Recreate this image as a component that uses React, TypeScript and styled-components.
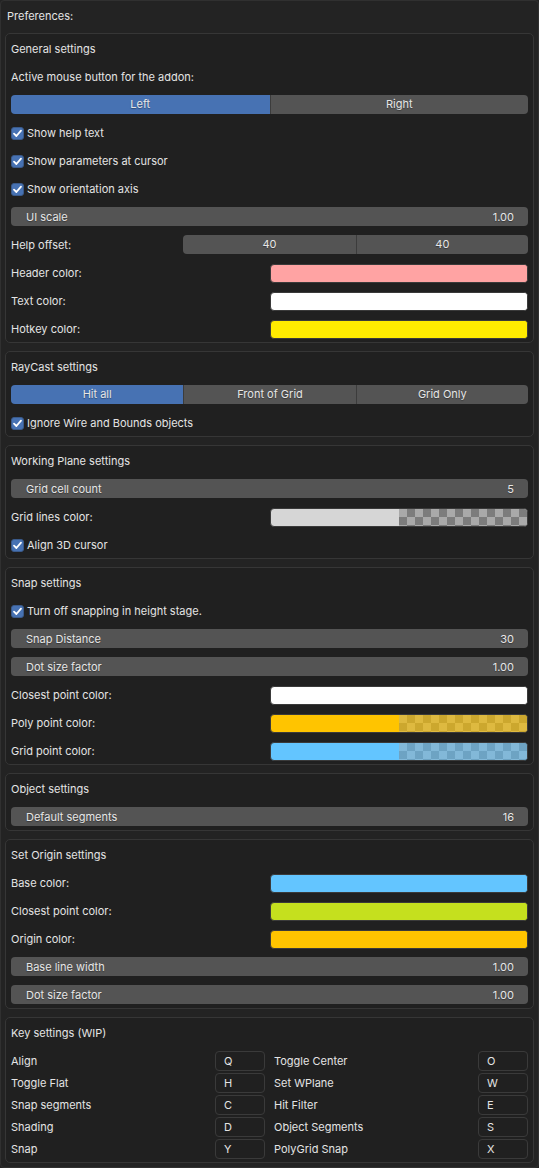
import React from "react";
import styled, { createGlobalStyle } from "styled-components";

const GlobalStyle = createGlobalStyle`
  html, body { margin: 0; padding: 0; background: #232323; }
  * { box-sizing: border-box; }
  body { font-family: Inter, "Noto Sans", "DejaVu Sans", sans-serif; font-size: 11px; color: #e4e4e4; }
`;

const Panel = styled.div`
  width: 539px;
  height: 1168px;
  border: 1px solid #303030;
  border-radius: 4px;
  padding: 5px 4px 5px 4px;
  display: flex;
  flex-direction: column;
  gap: 7px;
  background: #232323;
  & > section + section {
    margin-top: 1px;
  }
`;

const Title = styled.div`
  height: 20px;
  line-height: 20px;
  padding-left: 2px;
`;

const Box = styled.section`
  border: 1px solid #363636;
  border-radius: 5px;
  background: #202020;
  padding: 5px 5px 3px 5px;
  display: flex;
  flex-direction: column;
  gap: 8px;
`;

const Label = styled.div`
  height: 20px;
  line-height: 20px;
  white-space: nowrap;
  overflow: hidden;
`;

const Segmented = styled.div<{ $cols: number }>`
  display: grid;
  grid-template-columns: repeat(${(p) => p.$cols}, 1fr);
  height: 19px;
  border-radius: 4px;
  overflow: hidden;
  margin-bottom: 1px;
`;

const SegButton = styled.div<{ $active?: boolean }>`
  background: ${(p) => (p.$active ? "#4772b3" : "#545454")};
  color: #e6e6e6;
  text-align: center;
  line-height: 19px;
  text-shadow: 0 1px 1px rgba(0, 0, 0, 0.35);
  & + & {
    border-left: 1px solid #3c3c3c;
  }
`;

const CheckRow = styled.label`
  display: flex;
  align-items: center;
  gap: 3px;
  height: 20px;
`;

const CheckBox = styled.span`
  width: 13px;
  height: 13px;
  border-radius: 3px;
  background: #4772b3;
  border: 1px solid #3a5a8a;
  display: flex;
  align-items: center;
  justify-content: center;
`;

const Slider = styled.div`
  height: 19px;
  margin-bottom: 1px;
  border-radius: 4px;
  background: #545454;
  display: flex;
  justify-content: space-between;
  align-items: center;
  padding: 0 14px 0 15px;
  color: #e6e6e6;
  text-shadow: 0 1px 1px rgba(0, 0, 0, 0.35);
`;

const SplitRow = styled.div<{ $tpl: string }>`
  display: grid;
  grid-template-columns: ${(p) => p.$tpl};
  align-items: center;
  height: 20px;
`;

const ColorField = styled.div<{ $color: string; $alpha?: string }>`
  height: 19px;
  border-radius: 4px;
  border: 1px solid #3a3a3a;
  overflow: hidden;
  display: grid;
  grid-template-columns: 1fr 1fr;
  background: ${(p) => p.$color};
  & > span:last-child {
    background: ${(p) =>
      p.$alpha
        ? `linear-gradient(${p.$alpha}, ${p.$alpha}), conic-gradient(#7a7a7a 25%, #a8a8a8 0 50%, #7a7a7a 0 75%, #a8a8a8 0) 0 0 / 16px 16px`
        : p.$color};
  }
`;

const KeyGrid = styled.div`
  display: grid;
  grid-template-columns: 1fr 1fr;
  column-gap: 9px;
  row-gap: 2px;
`;

const KeyRow = styled.div`
  display: flex;
  align-items: center;
  justify-content: space-between;
  height: 20px;
`;

const KeyBox = styled.div`
  width: 50px;
  height: 20px;
  border: 1px solid #3a3a3a;
  border-radius: 4px;
  padding-left: 8px;
  line-height: 18px;
  color: #e4e4e4;
`;

const Check = ({ label }: { label: string }) => (
  <CheckRow>
    <CheckBox>
      <svg width="11" height="11" viewBox="0 0 11 11">
        <path d="M2 5.6 L4.4 8 L9 2.6" fill="none" stroke="#fff" strokeWidth="1.8" strokeLinecap="round" strokeLinejoin="round" />
      </svg>
    </CheckBox>
    <span>{label}</span>
  </CheckRow>
);

const SliderRow = ({ label, value }: { label: string; value: string }) => (
  <Slider>
    <span>{label}</span>
    <span>{value}</span>
  </Slider>
);

const ColorRow = ({ label, color, alpha }: { label: string; color: string; alpha?: string }) => (
  <SplitRow $tpl="1fr 1fr">
    <Label>{label}</Label>
    <ColorField $color={color} $alpha={alpha}>
      <span />
      <span />
    </ColorField>
  </SplitRow>
);

const keys: [string, string][] = [
  ["Align", "Q"],
  ["Toggle Center", "O"],
  ["Toggle Flat", "H"],
  ["Set WPlane", "W"],
  ["Snap segments", "C"],
  ["Hit Filter", "E"],
  ["Shading", "D"],
  ["Object Segments", "S"],
  ["Snap", "Y"],
  ["PolyGrid Snap", "X"],
];

export default function App() {
  return (
    <>
      <GlobalStyle />
      <Panel>
        <Title>Preferences:</Title>

        <Box>
          <Label>General settings</Label>
          <Label>Active mouse button for the addon:</Label>
          <Segmented $cols={2}>
            <SegButton $active>Left</SegButton>
            <SegButton>Right</SegButton>
          </Segmented>
          <Check label="Show help text" />
          <Check label="Show parameters at cursor" />
          <Check label="Show orientation axis" />
          <SliderRow label="UI scale" value="1.00" />
          <SplitRow $tpl="1fr 2fr">
            <Label>Help offset:</Label>
            <Segmented $cols={2}>
              <SegButton>40</SegButton>
              <SegButton>40</SegButton>
            </Segmented>
          </SplitRow>
          <ColorRow label="Header color:" color="#ffa3a3" />
          <ColorRow label="Text color:" color="#ffffff" />
          <ColorRow label="Hotkey color:" color="#ffeb00" />
        </Box>

        <Box>
          <Label>RayCast settings</Label>
          <Segmented $cols={3}>
            <SegButton $active>Hit all</SegButton>
            <SegButton>Front of Grid</SegButton>
            <SegButton>Grid Only</SegButton>
          </Segmented>
          <Check label="Ignore Wire and Bounds objects" />
        </Box>

        <Box>
          <Label>Working Plane settings</Label>
          <SliderRow label="Grid cell count" value="5" />
          <ColorRow label="Grid lines color:" color="#d6d6d6" alpha="rgba(214,214,214,0.02)" />
          <Check label="Align 3D cursor" />
        </Box>

        <Box>
          <Label>Snap settings</Label>
          <Check label="Turn off snapping in height stage." />
          <SliderRow label="Snap Distance" value="30" />
          <SliderRow label="Dot size factor" value="1.00" />
          <ColorRow label="Closest point color:" color="#ffffff" />
          <ColorRow label="Poly point color:" color="#ffc400" alpha="rgba(255,196,0,0.62)" />
          <ColorRow label="Grid point color:" color="#63c5ff" alpha="rgba(99,197,255,0.55)" />
        </Box>

        <Box>
          <Label>Object settings</Label>
          <SliderRow label="Default segments" value="16" />
        </Box>

        <Box>
          <Label>Set Origin settings</Label>
          <ColorRow label="Base color:" color="#63c5ff" />
          <ColorRow label="Closest point color:" color="#c5e01e" />
          <ColorRow label="Origin color:" color="#ffc400" />
          <SliderRow label="Base line width" value="1.00" />
          <SliderRow label="Dot size factor" value="1.00" />
        </Box>

        <Box>
          <Label>Key settings (WIP)</Label>
          <KeyGrid>
            {keys.map(([name, key]) => (
              <KeyRow key={name}>
                <span>{name}</span>
                <KeyBox>{key}</KeyBox>
              </KeyRow>
            ))}
          </KeyGrid>
        </Box>
      </Panel>
    </>
  );
}
